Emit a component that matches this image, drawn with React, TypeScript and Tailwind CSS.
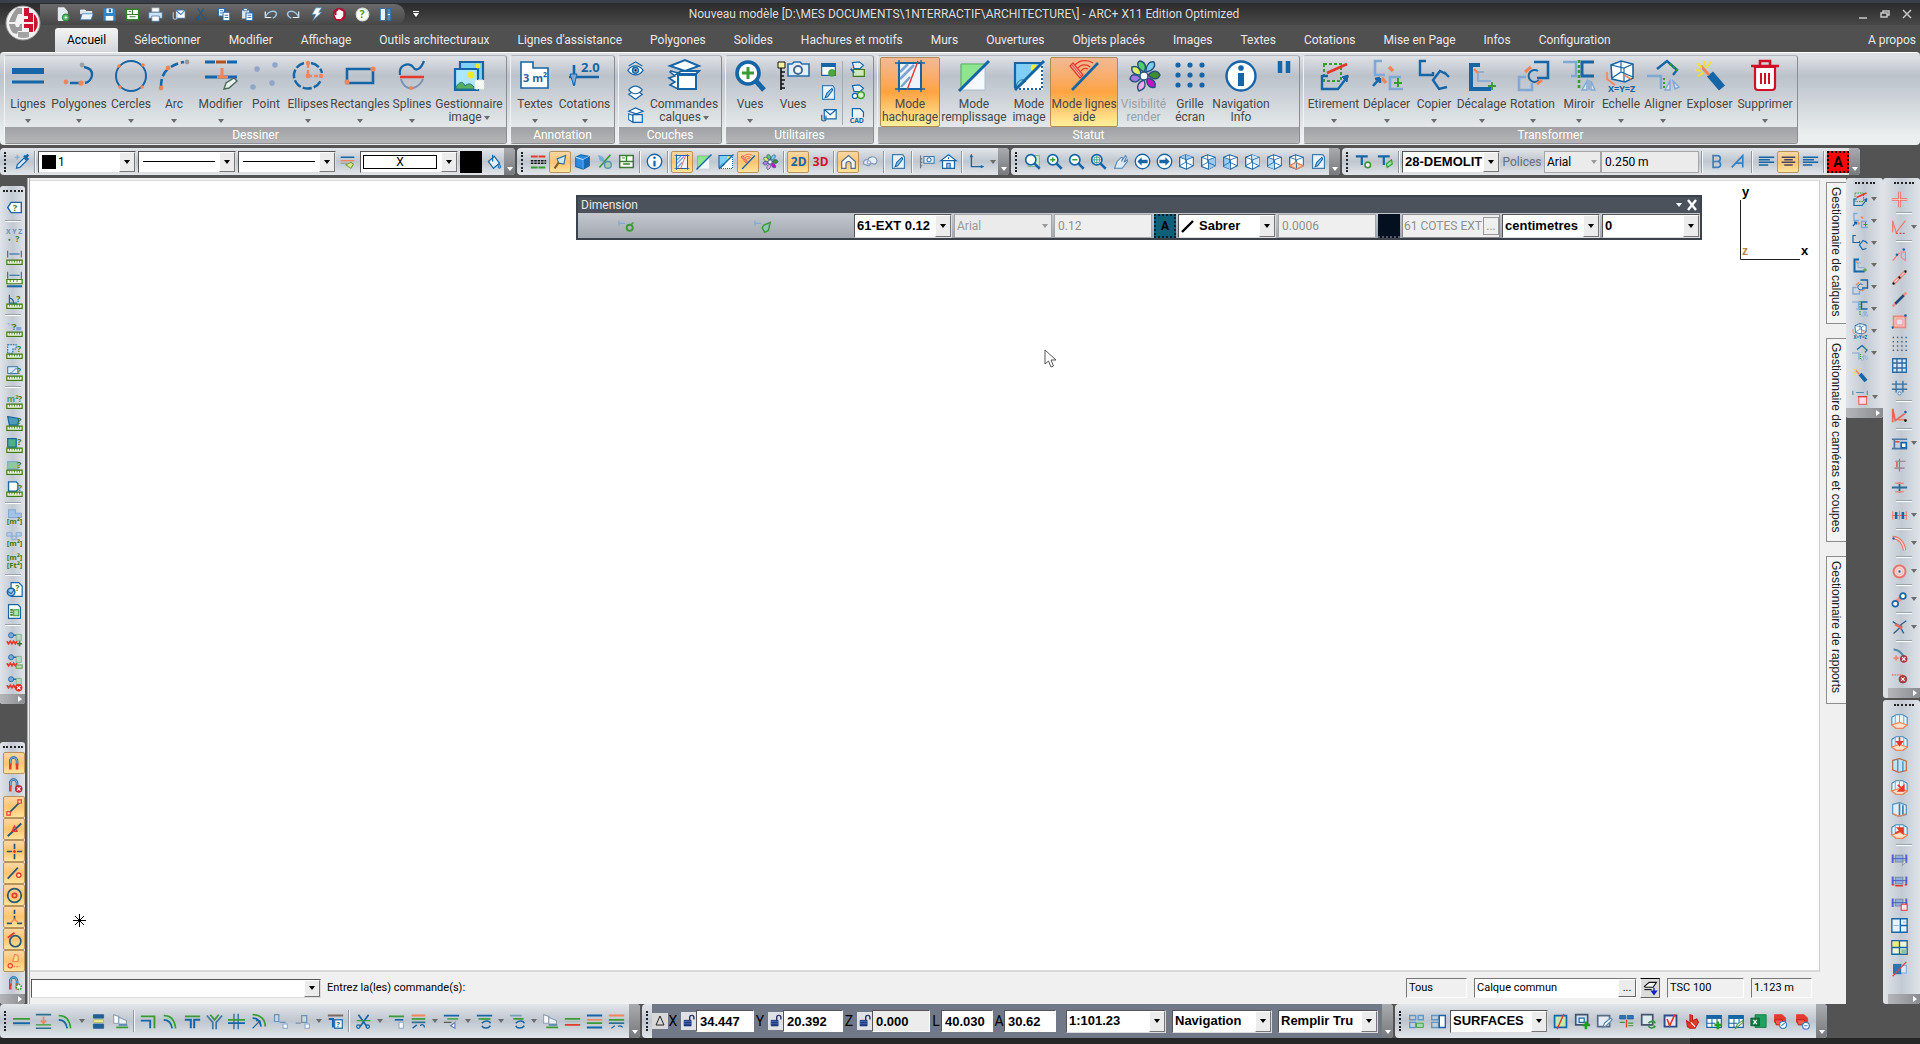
import React from 'react';

type TextShape = { t: string; x: number; y: number; s: number; f: string };
// [path, stroke, fill, stroke width, dash]
type Shape = [string, string, string?, number?, string?] | TextShape;

const B = '#1565a7';
const L = '#7fa8d4';
const R = '#e5392d';
const O = '#f0855a';
const G = '#3a9b35';
const D = '#3d7a12';
const P = '#a9c8ea';
const W = '#ffffff';
const K = '#111111';
const N = 'none';

const dot = (x: number, y: number, r: number) =>
  `M${x - r} ${y}a${r} ${r} 0 1 0 ${2 * r} 0a${r} ${r} 0 1 0 ${-2 * r} 0`;

const ruler: Shape[] = [
  ['M1 13h18v5H1z', D, '#f4fbe9', 1.4],
  ['M4 13v3M7 13v3M10 13v3M13 13v3M16 13v3', D, N, 1],
];
const ask = (x: number, y: number, s = 11): Shape => ({ t: '?', x, y, s, f: D });

const box = (face: string, fill: string): Shape[] => [
  ['M2 5l7-3 9 3v10l-8 4-8-3z', B, W, 1.2],
  [face, N, fill],
  ['M2 5l8 3 8-3M10 8v11M2 5v11M9 2v9M2 15l7-4 9 4', B, N, 1],
];
const room = (extra: Shape[]): Shape[] => [
  ['M1 5l5-3h8l5 3v9l-5 4H6l-5-4z', '#3f86b8', '#e8f6fd', 1.2],
  ['M10 2v9M5 3v9M15 3v9', L, N, 1.2],
  ['M1 14l9-3 9 3-5 4H6z', O, '#fde3c8', 1.4],
  ...extra,
];
const magnet: Shape[] = [
  ['M5 12V7a4 4 0 0 1 8 0v5', B, N, 3],
  ['M5 12V7a4 4 0 0 1 8 0v5', P, N, 1],
  ['M5 10v7M13 10v7', R, N, 3],
];
const lens: Shape[] = [
  [dot(8, 8, 6), B, W, 2],
  ['M12.5 12.5l6 6', B, N, 3],
];
const server: Shape[] = [
  [dot(6, 5, 3), B, L, 1],
  ['M9 5h5', B, N, 1.5],
  ['M12 4h6v7h-6z', '#7fae8d', '#b9d8c0', 1],
  ['M1 12l2 3 2-3 2 3 2-3 2 3 2-3', R, N, 2],
];
const folder: Shape[] = [
  ['M3 2h9l4 4v5H3z', R, R, 1],
  ['M3 8h9l3 6H5z', '#b01818', '#f25a50', 1],
];
const dims: Shape[] = [
  ['M2 4v10M18 4v10', '#5a62d8', N, 2.4],
  ['M5 5h9v8H5z', '#7a8aa5', '#8fb0d8', 1.2],
  ['M1 9h18', '#4450c8', N, 1],
];

const big: Record<string, Shape[]> = {
  lignes: [['M0 11h32', B, N, 6], ['M0 22h32', B, N, 3]],
  polygones: [
    ['M21 7c12 2 9 14 1 16', B, N, 2.4],
    ['M7 23h10', B, N, 2.4],
    [dot(19, 5, 2.4), N, '#9aa0a8'], [dot(3, 22, 2.4), N, O], [dot(18, 23, 2.6), N, O],
  ],
  cercles: [[dot(16, 16, 15), B, N, 2], [dot(4, 6, 1.8), N, O], [dot(28, 5, 1.8), N, O], [dot(5, 27, 1.8), N, O], [dot(27, 27, 1.8), N, O]],
  arc: [
    ['M3 27c0-8 2-14 7-18', B, N, 2.6, '8 3'],
    ['M13 7c4-3 8-4 13-5', B, N, 2.6, '8 3'],
    [dot(3, 28, 2.4), N, O], [dot(10, 8, 2.4), N, O], [dot(29, 2, 2.4), N, '#9a9a9a'],
  ],
  modifier: [
    ['M0 2h10M22 2h10', B, N, 3], ['M11 2h10', '#b5501f', N, 3],
    ['M0 17h32', B, N, 3], ['M17 8v9M12 17h11', O, N, 3],
    ['M19 29l2-6 8-5 3 3-8 7z', '#4d6a60', '#e9f5ea', 1.4],
  ],
  point: [[dot(7, 9, 2.8), N, '#8fa6c8'], [dot(25, 5, 2.8), N, '#8fa6c8'], [dot(3, 27, 2.8), N, '#8fa6c8'], [dot(22, 23, 2.8), N, '#8fa6c8']],
  ellipses: [
    ['M12 3a14 13 0 1 0 17 17M19 3a14 13 0 0 1 11 10', B, N, 2.4, '9 2'],
    ['M16 4v12h14', O, N, 2.4, '4 2'], [dot(16, 3, 2.2), N, O], [dot(16, 16, 2.4), N, O], [dot(29, 16, 2.2), N, O],
  ],
  rectangles: [['M3 9h26v14H3z', B, N, 2.6], [dot(29, 9, 2.6), N, O], [dot(3, 22, 2.6), N, O]],
  splines: [
    ['M4 15C2 4 14 2 17 7s8 2 11-6', B, N, 2.2],
    ['M4 17h24', R, N, 2.6], ['M5 19c2 8 8 10 12 9s8-4 10-9', '#7c93b3', N, 2], [dot(15, 28, 2), N, O],
  ],
  gestionnaire: [
    ['M7 2h23v19H7z', B, '#7fd3fb', 2.2], ['M2 9h23v21H2z', B, '#aee6fb', 2.2],
    [dot(18, 15, 3.4), N, '#f3ea25'], [dot(25, 6, 2.4), N, '#f3ea25'],
    ['M3 27c4-6 7-6 9-1 3-3 6-3 9 1v2H3z', '#1d7b91', '#58b05c', 1],
    ['M22 20h9v9h-9z', '#dfe7e0', '#f5fbf0', 1, '2 1'],
  ],
  textes: [['M2 2h12v6h15v20H2z', B, W, 1.6], { t: '3 m²', x: 4, y: 22, s: 11, f: '#28649c' }],
  cotations: [
    ['M5 5v20M0 17h30', B, N, 2.6], ['M1 14l4 12 3-12z', B, L, 1],
    { t: '2.0', x: 12, y: 12, s: 13, f: B },
  ],
  commandes: [
    ['M2 6l15-6 14 6-14 5z', B, W, 2], ['M3 11l7 2v16l-8-4 5-3-6-4 6-2-5-4z', B, W, 1.6],
    ['M9 14l4-3h18l-3 3z', B, W, 2], ['M10 15h18v14H10z', B, W, 2],
  ],
  vues: [[dot(14, 13, 11), B, W, 3.6], ['M14 7v12M8 13h12', G, N, 3], ['M22 21l8 9', B, N, 5]],
  vues2: [
    ['M4 8v22M4 12h4M4 16h3M4 20h4M4 24h3M4 28h4', K, N, 1.6], ['M1 2h7v6H1z', K, '#f6f3a0', 1],
    ['M11 4h4l2-2h6l2 2h7v12H11z', '#2a6da8', '#e2effa', 1.6], [dot(21, 10, 4), '#4a6a90', '#f5fafc', 2],
  ],
  hachurage: [
    ['M5 3h22v26H5z', B, '#eef3fa', 2], ['M6 12l8-8M6 19L20 5M7 27l9-10', '#7fa3cf', N, 2.6],
    ['M1 3h30M1 29h30M5 0v32M27 0v32', B, N, 1.4], ['M24 1L13 30', R, N, 1.4],
  ],
  remplissage: [
    ['M3 4h24v26H3z', '#a8bccf', '#f7fafd', 1], ['M3 4h23L3 29z', N, '#8fe58f'], ['M3 4h24M3 4v26', '#5ab85a', N, 1.2],
    ['M31 1L1 31', B, N, 3],
  ],
  image: [
    ['M2 3h28v27H2z', N, W], ['M2 3h28L2 30z', N, '#7fd0f7'], [dot(21, 8, 3.4), N, '#f4ec37'],
    ['M3 26c3-7 6-7 10-5L6 27z', B, '#8fe0d8', 1], ['M29 6v23H4', B, N, 2, '2 2'], ['M2 28V3h26', B, N, 2.2],
    ['M31 1L2 30', B, N, 3],
  ],
  lignesaide: [
    ['M2 6l10 12 3-3L5 3z', R, '#f6b0a0', 1.2], ['M4 5l10 12', R, N, 1],
    ['M7 5c5-6 14-5 18-2M10 8c3-4 9-4 12-1M13 11c2-3 5-3 7-2', R, N, 1.2],
    ['M30 3L4 30', B, N, 2.6],
  ],
  visibilite: [
    ['M16 12C8 8 9 2 12 1c5 1 7 5 4 11z', '#28527e', '#4fd070', 1.4],
    ['M18 12c0-8 4-11 8-10 2 4-1 9-8 10z', '#28527e', '#7ccdf0', 1.4],
    ['M20 15c6-6 10-4 12 0-2 5-7 5-12 0z', '#28527e', '#3f8f2f', 1.4],
    ['M19 18c8 1 9 6 8 9-5 2-9-2-8-9z', '#28527e', '#c216c9', 1.4],
    ['M16 20c3 7-1 10-5 11-3-4-1-9 5-11z', '#28527e', '#f7a6e6', 1.4],
    ['M13 18c-5 6-9 4-11 1 1-5 6-6 11-1z', '#28527e', '#a878e0', 1.4],
    ['M13 15C5 15 3 11 4 7c5-2 9 2 9 8z', '#28527e', '#dff25a', 1.4],
    [dot(16, 16, 4), '#28527e', W, 1.4],
  ],
  grille: [4, 16, 28].flatMap((x) => [5, 15, 25].map((y): Shape => [dot(x, y, 2.6), N, B])),
  navigation: [[dot(16, 16, 14.5), B, W, 2.4], [dot(16, 8, 2.8), N, B], ['M16 13v13', B, N, 6]],
  pause: [['M12 2v12M20 2v12', B, N, 4.5]],
  etirement: [
    ['M6 4h17v17H6z', G, N, 2, '3 2'], ['M4 15v14h16l10-13M10 16H4', B, N, 2.4], ['M24 17l6-2-1 7z', B, B, 1],
    ['M9 13L29 4', R, N, 3],
  ],
  deplacer: [
    ['M11 1H4v14h10', L, N, 2.6], ['M2 26l7-8M9 18l-5 1M9 18v5', B, N, 2.6], ['M30 17H19v12h13', L, N, 2.6],
    ['M27 18v9M23 23h8', G, N, 2], ['M18 7l4 4M11 18l4 5', O, N, 3.4],
  ],
  copier: [['M8 1H2v14h13v-3', B, N, 2.4], ['M28 14l-6-3-7 9 6 9 8-2M26 12l5 5', B, N, 2.4]],
  decalage: [['M14 5H5v24h20', B, N, 4], ['M18 12h-6v9h13', L, N, 1.6], ['M8 9l4 4', O, N, 2.4], ['M22 26h8M26 22v8', G, N, 1.8]],
  rotation: [
    ['M17 2h14v16H20', B, N, 2.6], ['M9 17H2v13h13v-7', L, N, 2.6], ['M21 11a6 6 0 1 0 1 9', B, N, 2], ['M8 12l6-5M20 24l5-4', O, N, 3],
  ],
  miroir: [
    ['M31 2H19v14h12', B, N, 3], ['M0 2h13v14H8', L, N, 2.4], ['M16 0v30', G, N, 2.6, '3 2'],
    ['M26 20v10M24 21l-5 9h5zM28 21l4 9h-4z', L, '#d7e5f4', 1.4],
  ],
  echelle: [
    ['M6 5l10-4 12 3v14l-8 4-13-3z', B, W, 1.6], ['M6 5l13 3 9-4M19 8v14M16 1v11M7 18l9-6 12 5', B, N, 1.2],
    ['M2 12v7l8 6M19 15l7 4', O, N, 1.6], { t: 'X=Y=Z', x: 3, y: 32, s: 9, f: B },
  ],
  aligner: [
    ['M10 9l10-8 10 9-4 5', B, N, 2.4], ['M23 4l8 7', G, N, 2.6, '2 2'], ['M0 16h14v13', L, N, 2.4], ['M17 18v12', G, N, 2, '2 2'],
    ['M23 21l-5 9h5zM26 21l6 6-4 2z', L, '#d7e5f4', 1.4],
  ],
  exploser: [['M16 14l12 14', B, N, 8], ['M7 6l8 9', O, N, 3], ['M10 1l2 7M3 3l5 5M1 10l7 1M4 16l5-3M14 6l3-4', '#f1e12a', N, 1.8]],
  supprimer: [
    ['M6 7h20v20q0 3-3 3H9q-3 0-3-3z', '#cf1126', W, 2.2], ['M2 6h28M11 5V1h10v4', '#cf1126', N, 2.6],
    ['M12 13v11M16 13v11M20 13v11', '#cf1126', N, 2],
  ],
};

const small: Record<string, Shape[]> = {
  // quick access bar
  new: [['M3 1h8l4 5v12H3z', W, '#dfeaf2', 1], [dot(13, 14, 4.5), '#2f8a45', '#5cba6c', 1.4], [dot(13, 14, 1.4), N, W]],
  open: [['M2 4h6l2 2h7v3H2z', W, '#d6e4ee', 1], ['M2 17l2-8h15l-3 8z', '#3a7ab3', '#eaf3fa', 1]],
  save: [['M2 2h14l2 2v14H2z', '#2a78b6', '#2f86c8', 1], ['M6 2h8v6H6zM5 12h10v6H5z', N, W], ['M9 3h3v4H9z', N, B]],
  plan: [['M2 3h16v14H2z', '#3a7d35', W, 1.8], ['M2 10h16M10 3v7M6 13h8', '#3a7d35', N, 1.6], ['M5 6h3', '#3a7d35', N, 1.2]],
  print: [['M5 1h10v6H5z', '#7a8c9c', W, 1], ['M1 7h18v8H1z', '#3a6fa0', '#cfe4f6', 1], ['M5 12h10v7H5z', '#3a6fa0', W, 1]],
  mail: [['M6 4h13v11H6z', '#3372a8', W, 1.4], ['M6 4l7 6 6-6', '#3372a8', N, 1.4], ['M3 7v8a3 3 0 0 0 5 0V8', '#9fc0de', N, 1.6]],
  cut: [['M5 2l8 12M13 2L5 14', '#25567d', N, 1.6], [dot(4, 16, 2), '#25567d', N, 1.4], [dot(14, 16, 2), '#25567d', N, 1.4]],
  copy: [['M2 2h8v10H2z', '#2d6da6', W, 1.4], ['M8 7h9v11H8z', '#2d6da6', W, 1.4], ['M4 5h4M4 8h3M10 11h5M10 14h5', '#2d6da6', N, 1.2]],
  paste: [['M2 4h11v12H2z', '#2d6da6', '#dbe9f5', 1.6], ['M5 2h5v3H5z', '#2d6da6', W, 1], ['M8 8h9v10H8z', '#2d6da6', W, 1.4], ['M10 11h5M10 14h5', '#2d6da6', N, 1.2]],
  undo: [['M3 6v8h8', W, N, 1.4], ['M3 14c4-10 14-10 15-5 0 3-3 5-5 6', '#9cc8ec', N, 1.8]],
  redo: [['M17 6v8H9', W, N, 1.4], ['M17 14C13 4 3 4 2 9c0 3 3 5 5 6', '#9cc8ec', N, 1.8]],
  bolt: [['M9 1h8l-4 6h4L5 18l4-8H4z', '#3f86bd', W, 1]],
  stop: [[dot(10, 10, 9), N, '#b01030'], ['M6 16l-3-6 3 1V6l2-1 1-2 2 1 2 1 2 1v6l-3 4z', N, W]],
  help: [[dot(10, 10, 8.5), '#cfe0d0', W, 1.4], { t: '?', x: 6, y: 15, s: 14, f: '#4a9a25' }],
  door: [['M3 2h7v16H3z', '#2a6aa5', '#eaf2fa', 1.2], ['M12 2h5v16h-5z', '#2a6aa5', '#4a8bc4', 1.2], ['M13 10h3', W, N, 1.4]],
  // properties bar
  dropper: [['M4 18l1-4 8-8 3 3-8 8z', B, '#dcecf8', 1.4], ['M13 3l5 5M15 5l3-3', B, N, 3], ['M5 2v6M2 5h6', L, N, 1.4]],
  brushlines: [['M2 5h16', B, N, 2], ['M2 9h16', O, N, 1.6], ['M8 14l6 4 3-5-3-2z', '#7a9a40', '#dbe88a', 1.2], ['M2 12h8', '#888', N, 1]],
  paint: [['M4 10l7-6 6 8-7 6z', B, '#dff0fa', 1.4], ['M9 2v8', B, N, 1.4], ['M17 13c2 3 2 5 0 5s-2-2 0-5z', B, L, 1]],
  linetypes: [['M1 4h18', R, N, 2.4, '8 1'], ['M1 9h18M1 12h18', K, N, 1.8, '3 1'], ['M1 17h18', G, N, 2.4, '8 1']],
  trowel: [['M16 3l-2 10-6-1-2-5z', '#3a7290', '#cfe9ef', 1.4], ['M8 11l-5 7', '#7a5a30', N, 2.4]],
  cube: [['M2 5l6-3 10 2v11l-7 4-9-3z', B, '#2c8be0', 1.2], ['M2 5l9 3 7-4M11 8v11', '#bfe0fa', N, 1.2], ['M11 8l7-4v11l-7 4z', N, '#1668b5']],
  percent: [['M3 3l5 2 2 5-5-1z', L, '#6fb0de', 1], ['M17 2L4 17', G, N, 2], [dot(14, 14, 4), '#5a90b8', '#a8d0a8', 1.6]],
  info: [[dot(10, 10, 8.5), B, W, 1.6], [dot(10, 5.5, 1.5), N, B], ['M10 9v7', B, N, 2.6]],
  d2: [{ t: '2D', x: 1, y: 15, s: 14, f: '#1464b0' }],
  d3: [{ t: '3D', x: 1, y: 15, s: 14, f: '#d80f22' }],
  house: [['M2 10l8-7 8 7v8h-5v-5a3 3 0 0 0-6 0v5H2z', '#4f6f96', '#f4f8fb', 1.4]],
  clouds: [['M2 13c-1-4 2-6 5-5 1-4 8-5 10-1 2 4-1 6-3 6l-3-1-3 3z', '#7d97b5', '#e6eef6', 1.4], [dot(8, 11, 2), '#7d97b5', W, 1.2]],
  sheet: [['M3 2h12l2 3v13H3z', '#3f7cab', '#eaf5fb', 1.4], ['M6 16l2-5 6-6 1 2-6 8z', B, '#8fc1e2', 1.2]],
  camruler: [['M3 3v15M3 7h2M3 11h2M3 15h2', '#777', N, 1.4], ['M7 4h12v8H7z', '#3f78a8', '#dfedf8', 1.2], [dot(13, 8, 2.4), '#3f78a8', W, 1.2]],
  villa: [['M1 9l9-7 9 7zM3 9h14v9H3z', B, W, 1.4], ['M8 12h4v6H8zM10 5v2', B, '#9cc4e8', 1.2]],
  axes: [['M4 2v14h14', B, N, 1.6], ['M2 5l2-4 2 4zM15 14l4 2-4 2z', N, B]],
  // zoom bar
  zoomwin: [['M5 3h13v13H5z', '#7ba87b', '#d3ecc9', 1], ...lens],
  zoomin: [...lens, ['M8 5v6M5 8h6', G, N, 1.6]],
  zoomout: [...lens, ['M5 8h6', G, N, 1.6]],
  zoomall: [...lens, ['M8 3v10M3 8h10M5 5h6v6H5z', '#3a9b80', N, 1]],
  pan: [['M3 18l3-8 5-5 2 1-2 4 5-7 1 2-3 6 4-3v2l-6 8z', '#4f83b2', '#dfeaf4', 1.2]],
  prev: [[dot(10, 10, 8.5), B, W, 1.6], ['M9 5l-5 5 5 5v-3h7V8H9z', N, B]],
  next: [[dot(10, 10, 8.5), B, W, 1.6], ['M11 5l5 5-5 5v-3H4V8h7z', N, B]],
  boxtop: box('M2 5l7-3 9 3-8 3z', '#9cc9f0'),
  boxright: box('M10 8l8-3v10l-8 4z', '#9cc9f0'),
  boxleft: box('M2 5l8 3v11l-8-3z', '#9cc9f0'),
  boxback: box('M9 2l9 3v10l-9-4z', '#d2e8fa'),
  boxfront: box('M2 5l8 3v11l-8-3z', '#bcdcf5'),
  boxfloor: [...box('M2 15l7-4 9 4-8 4z', '#fbd0b0'), ['M2 15l7-4 9 4-8 4z', O, N, 1.4]],
  // text bar
  textgear: [['M1 4h14M8 4v10', B, N, 2.6], [dot(15, 14, 3.2), G, W, 2]],
  textbrush: [['M1 4h14M8 4v10', B, N, 2.6], ['M12 17l-1-4 6-5 1 5z', G, '#9fe0a8', 1.4]],
  bold: [['M6 3h5a3.5 3.5 0 0 1 0 7H6zM6 10h6a3.6 3.6 0 0 1 0 7H6z', '#3a80c0', N, 2]],
  italic: [['M2 17L15 3v14M7 12h8', '#3a80c0', N, 2]],
  alignleft: [['M1 5h18M1 8h13M1 11h18M1 14h11', B, N, 1.8]],
  aligncenter: [['M2 5h16M5 8h10M2 11h16M5 14h10', '#446', N, 1.8]],
  // small ribbon commands
  eye: [['M2 6l8-5 8 5', B, N, 1.4], ['M1 11c5-7 13-7 18 0-5 7-13 7-18 0z', B, W, 1.4], [dot(10, 11, 3.6), B, '#7fa8c8', 1.6], [dot(10, 11, 1.2), N, K]],
  layers: [['M2 12l8-5 8 5-8 6z', B, W, 1.4], ['M2 7c5-6 11-6 16 0-5 6-11 6-16 0z', B, W, 1.4]],
  layers2: [['M2 5l8-4 9 4-8 3z', B, W, 1.4], ['M2 8l5 2v8l-5-3z', B, W, 1.2], ['M7 9h11v9H7z', B, '#e5f1fb', 1.4]],
  window: [['M2 3h16v14H2z', B, W, 1.4], ['M2 3h16v4H2z', N, B], [dot(14, 14, 4), G, '#4aa843', 1]],
  envelope: [['M5 3h14v11H5z', B, W, 1.4], ['M5 3l7 6 7-6', B, N, 1.4], ['M2 9v6a3 3 0 0 0 5 0v-5', '#3f6f98', N, 1.6]],
  export1: [['M4 2l8-1 5 4-4 4H6z', B, '#e3effa', 1.4], ['M5 10h13v8H5z', D, '#cfe8bf', 1.4], ['M2 9l4 5', B, N, 2]],
  export2: [['M4 2l8-1 5 4-4 4H6z', B, '#e3effa', 1.4], [dot(14, 13, 4), G, '#d8efd0', 1.8], [dot(7, 14, 3), B, W, 1.4]],
  cad: [['M4 12V2h9l4 4v6', B, '#e9f4fb', 1.4], { t: 'CAD', x: 1, y: 19, s: 8, f: B }],
  // measuring bar
  tag: [['M6 4h12v12H6l-4-6z', B, W, 1.6], ask(8, 14, 11)],
  xyz: [{ t: 'X Y Z', x: 0, y: 8, s: 8, f: '#6b8fb8' }, [dot(4, 15, 1.2), N, D], ask(11, 18, 10)],
  dist: [['M2 2v8M18 2v8M4 6h12', B, N, 1.2], ...ruler],
  dist2: [['M2 1v8M18 1v8M4 5h12', B, N, 1.2], ['M1 10h18v5H1z', D, '#f4fbe9', 1.4], ['M5 10v3M9 10v3M13 10v3', D, N, 1], ['M1 18h18', B, N, 2.4]],
  angle: [['M4 2v10h9M4 6c3 0 5 3 5 6', B, N, 1.4], ask(12, 10, 10), ...ruler],
  seg: [['M2 3l6 2 4 4', L, N, 1.4, '2 2'], ['M12 7h6v4h-6z', N, L], ask(7, 10, 11), ...ruler],
  perim: [['M2 2h10v5H8v5H2z', B, '#c9dff3', 1.2, '2 1'], ask(13, 10, 10), ...ruler],
  curve: [['M2 2h12v8H2z', B, '#dbe9f6', 1], ['M5 9c4 0 4-5 8-5', L, N, 1.4], ask(13, 10, 10), ...ruler],
  area: [{ t: 'm²', x: 1, y: 10, s: 10, f: '#4f9a5a' }, ask(14, 11, 10), ...ruler],
  areapoly: [['M2 2l13 2-1 8H4z', B, '#4d9bb8', 1.4], ask(13, 10, 11), ...ruler],
  areasquare: [['M2 2h10v10H2z', B, '#4fb088', 1.4], ask(13, 9, 11), ...ruler],
  areablue: [['M2 3h12v9H2z', L, '#8fc8a0', 1.4], ask(13, 10, 11), ...ruler],
  outline: [['M3 1h9l2 2v7l-2 2H3z', B, W, 1.6], ask(14, 12, 10), ...ruler],
  m2fill: [['M3 1h8v4h7v5H3z', L, '#a3c3e6', 1.2], { t: '[m²]', x: 1, y: 18, s: 9, f: D }],
  m2split: [['M1 2h6v4H1zM12 2h6v4h-6zM7 6h5v4H7z', L, '#b7cfe9', 1], { t: '[m²]', x: 1, y: 18, s: 9, f: D }],
  m2ft: [{ t: '[m²]', x: 1, y: 8, s: 9, f: D }, { t: '[Ft²]', x: 1, y: 18, s: 9, f: D }],
  reportask: [['M6 2h9l4 4v12H6z', B, W, 1.4], [dot(6, 13, 4.5), B, '#a8cbea', 1.6], ['M2 12l4 3 4-5', B, N, 1.4], ask(11, 12, 10)],
  report: [['M3 2h11l3 3v13H3z', B, W, 1.4], ['M5 8h3M5 11h3M5 14h3', D, N, 2], ['M9 8h6v7H9z', G, '#b0dfb0', 1.2]],
  srvadd: [...server, ['M16 12v6M13 15h6', D, N, 2]],
  srvlink: [...server, ['M12 14h7v4h-7z', '#6a9a50', '#c1dfb0', 1.2]],
  srvdel: [...server, [dot(15, 15, 4), R, '#e02020', 1], ['M13 13l4 4M17 13l-4 4', W, N, 1.4]],
  // snap bar
  magnet: magnet,
  magnetoff: [...magnet, [dot(15, 14, 4), '#b02030', '#c82838', 1], ['M13 12l4 4M17 12l-4 4', W, N, 1.4]],
  magnetgear: [...magnet, [dot(15, 14, 3), G, W, 2, '2 1']],
  snapend: [['M4 16L16 4', '#285878', N, 2], ['M1 15h4v4H1zM14 1h4v4h-4z', R, '#ffe3b0', 1.4]],
  snapmid: [['M2 18L18 3', '#285878', N, 2.2], ['M10 6l3 6H7z', R, N, 1.6]],
  snapcross: [['M10 1v6M10 13v6M1 10h6M13 10h6', '#285878', N, 2], ['M10 8v4M8 10h4', R, N, 1.6]],
  snapnear: [['M2 16L14 3', '#285878', N, 2], [dot(15, 12, 2.6), R, '#ffe3b0', 1.6]],
  snapcenter: [[dot(10, 10, 8), '#285878', N, 2], [dot(10, 10, 2.6), R, N, 2]],
  snapperp: [['M10 1v12', '#285878', N, 2, '5 2'], ['M1 17h6M13 17h6', '#285878', N, 2], ['M6 16l4-4 4 4', O, N, 1.6]],
  snaptan: [[dot(11, 12, 6.5), '#285878', N, 2], ['M2 8l8-6', R, N, 2]],
  snaplast: [['M10 2c5-1 5 4 4 8H8z', O, '#f9e28a', 1.4], [dot(5, 15, 2.6), R, N, 1.4], ['M9 16h7', O, N, 1.4, '2 1']],
  // drafting bars on the right
  crossred: [['M10 1v18M1 10h18', '#f0685e', N, 3], ['M10 1v18M1 10h18', '#fbd4cf', N, 1]],
  anglered: [['M2 2l4 14L17 2M2 2v14', '#ef7a70', N, 1.4], ['M6 17h12', R, N, 1.4, '2 2']],
  nodes: [['M2 16l5-6M7 10l3-3', '#ef7a70', N, 1.4], ['M12 6h5v10l-5-4z', '#e88', N, 1.4], [dot(7, 9, 1.5), N, B], [dot(15, 3, 1.5), N, B]],
  segred: [['M3 17L17 3', '#ef8078', N, 4], ['M3 17L17 3', '#fad5d0', N, 1.4], [dot(3, 17, 1.4), N, K], [dot(10, 10, 1.4), N, K], [dot(17, 3, 1.4), N, K]],
  segblue: [['M2 18l4-4M14 6l4-4', '#f0908a', N, 3], ['M5 15L15 5', '#1f4a78', N, 3]],
  rectred: [['M3 4h14v13H3z', '#f0857c', '#f5c9c6', 2], ['M6 7h8v7H6z', '#e88', '#dfe4ea', 1], [dot(17, 3, 1.6), N, B], [dot(2, 17, 1.4), N, B]],
  dotgrid: [['M2 3h18M2 8h18M2 13h18M2 18h18', B, N, 1.6, '1.6 3.4']],
  grid: [['M2 2h16v16H2zM7 2v16M13 2v16M2 7h16M2 13h16', '#2c6aa0', '#d8e9f8', 1.6]],
  lanes: [['M1 6h18M1 12h18M6 2v14M14 2v14', '#3a70a0', N, 1.6], [dot(10, 17, 1.8), '#3a70a0', W, 1]],
  vred: [['M2 2l3 14L16 8M2 2v16', '#e6655c', N, 2], ['M8 15h10', O, N, 2], [dot(17, 6, 1.6), N, B], [dot(17, 16, 1.6), N, K]],
  bracket: [['M1 5h18M1 16h18M4 5v11', '#4a78a8', N, 2], ['M5 8h5', R, N, 1.6], ['M12 9h6v6h-6z', B, W, 2]],
  caliper: [['M5 5h12M4 13h12M10 2v15', '#9a7a80', N, 1.4], ['M7 6v6', R, N, 1.4]],
  caliper2: [['M1 10h18M10 4v12', '#2f6f9a', N, 2.2], ['M5 5h10M5 15h10', '#f0857a', N, 1.6]],
  bars: [['M1 10h18', '#e8685e', N, 1.2], ['M6 6v8M14 6v8', B, N, 3], ['M2 5v10M10 5v10M18 5v10', '#f0857a', N, 1.4]],
  arcred: [['M2 3c7 0 13 6 14 15', '#ea7268', N, 4], ['M2 3c7 0 13 6 14 15', '#f8d8d0', N, 1.4], [dot(3, 4, 1.4), N, B]],
  ringred: [[dot(10, 10, 7), '#e8756c', '#f9dcd8', 2.4], [dot(10, 10, 4), '#f8b0a8', N, 1], [dot(10, 10, 1.4), N, B]],
  chain: [['M6 13l8-7', '#f0908a', N, 5], [dot(5, 15, 3.4), B, W, 2], [dot(14, 6, 3.4), B, W, 2]],
  starred: [['M2 3l8 5 8-6M10 8l5 9M3 17l10-9', '#2f6090', N, 1.6], ['M5 6l8 5', '#e8685e', N, 3]],
  arcdel: [['M3 3c7 0 10 5 12 8', '#4f87a8', N, 2.4], ['M3 13h6M6 10v6', '#f0857a', N, 2], [dot(15, 14, 4), '#9c3038', '#b04048', 1], ['M13 12l4 4M17 12l-4 4', W, N, 1.2]],
  listdel: [['M1 7h13', '#e88a80', N, 2, '2 1'], [dot(14, 12, 4.5), '#9c3038', '#b04048', 1], ['M12 10l4 4M16 10l-4 4', W, N, 1.2]],
  room: room([]),
  roomdown: room([['M10 3v7M7 8l3 4 3-4z', R, R, 2]]),
  roomblue: [['M2 4l8-2 8 3v11l-9 2-7-3z', '#b86a48', '#bfe3f7', 1.4], ['M8 3v14M14 5v12', '#3f7fae', N, 1.4]],
  roomse: room([['M8 7l7 6M15 8v6H9z', R, R, 2]]),
  roomside: [['M2 4l8-2 8 3v11l-9 2-7-3z', '#5a8fb8', '#dff0fa', 1.4], ['M10 3v14M14 5v12', '#3f7fae', N, 2], ['M2 15l8 3 8-3', O, N, 1.6]],
  roomright: room([['M5 12l8-4M8 6h6v6z', R, R, 2]]),
  dimbrush: [...dims, ['M13 17l2-6 3 2z', '#7a9a8a', '#dff0e0', 1]],
  dimred: [...dims, ['M1 14h3M16 14h3M5 15h9', R, N, 1.6]],
  dimbox: [...dims, ['M12 11h7v7h-7z', R, '#fbe6e6', 1.2]],
  viewports: [['M1 2h18v16H1z', B, '#e5f4fd', 1.6], ['M11 2v16M11 10h8', B, N, 1.6], ['M3 10h6M14 6h3', L, N, 1]],
  viewports2: [['M1 2h18v16H1z', B, '#eef7d2', 1.6], ['M2 3h8v7H2z', N, '#f0ee70'], ['M10 2v16M1 10h18', B, N, 1.6], ['M12 12h6v5h-6z', N, '#8fc0a0']],
  slash: [['M3 4h9v11H3z', B, '#2f74b0', 1], ['M12 5h6v9h-6', L, '#dbe9f5', 1.2], ['M2 18L18 1', '#d04a50', N, 1.6]],
  trash: [['M1 2v5M5 4h9M18 2v5', '#4f88b0', N, 1.2], ['M8 9h9v9H8z', '#e07070', '#f9e0e0', 1.4], ['M7 9h11', R, N, 1.4]],
  // walls bar
  wall: [['M0 7h20', G, N, 2], ['M0 12h20', B, N, 2], ['M0 14h20', '#7aa8a8', N, 1]],
  wallsplit: [['M1 2h18', '#2f7090', N, 2], ['M10 4v8M7 9l3 3 3-3', O, N, 2], ['M1 14h18', G, N, 1.6], ['M1 18h18', '#2f7090', N, 1.6]],
  wallarc: [['M2 3c8 0 13 5 14 15', G, N, 2], ['M2 8c6 0 9 4 10 10', B, N, 2], ['M2 5c8 0 10 4 12 13', '#a8d8b8', N, 1.6]],
  wallstack: [['M4 2h12v4H4zM4 13h12v5H4z', '#1f5f98', '#1f5f98', 1], ['M4 8h12v3H4z', '#a8b848', '#f3f0a8', 1]],
  wallslope: [['M2 2l6 2v8H2z', '#8a9ab0', W, 1.2], ['M8 5l9 4v4H8z', '#8a9ab0', '#eef2f6', 1.2], ['M5 17h14', G, N, 2], ['M8 14h10', B, N, 1.2]],
  wallL: [['M1 4h16v14', G, N, 2.2], ['M1 9h11v9', B, N, 2.2]],
  wallT: [['M1 4h18', G, N, 2.2], ['M1 8h7v10M19 8h-7v10', B, N, 2.4]],
  wallY: [['M1 3l7 8v8M19 3l-7 8v8', '#3f78a8', N, 2], ['M5 2l5 6 5-6', G, N, 2]],
  wallX: [['M7 1v18M12 1v18', '#3f78a8', N, 1.8], ['M0 8h20', G, N, 2], ['M0 12h20', B, N, 2]],
  wallarc2: [['M3 2c10 0 15 6 15 14', G, N, 2], ['M3 6c7 0 9 4 10 10', B, N, 2], ['M3 18l9-9M12 9H7M12 9v4', B, N, 1.4]],
  wallmove: [['M3 2h5v8H3zM9 11h7', '#6c90b0', '#c8d8e6', 1.4], ['M13 13h5v5h-5z', L, W, 1.2]],
  wallmove2: [['M2 12h6M9 3h6v8H9z', '#6c90b0', '#c8d8e6', 1.4], ['M13 13h5v5h-5z', L, W, 1.2]],
  walltrash: [['M1 3h18', '#7a6a60', N, 2.4], ['M2 7h5v10', B, N, 2.4], ['M9 8h9v10H9z', '#3a78b0', W, 1.6], { t: '?', x: 11, y: 17, s: 9, f: B }],
  cutwall: [['M4 2l10 14M16 2L6 16', B, N, 2], ['M2 9h16', G, N, 1.4], [dot(4, 16, 2), B, N, 1.4], [dot(15, 16, 2), B, N, 1.4]],
  wallprop: [['M1 4h18', G, N, 2], ['M8 8h10', B, N, 2], ['M13 11h5v7h-5z', '#8aa8c8', W, 1.2]],
  wallsync: [['M2 3h16', O, N, 2.4], ['M2 7h16', G, N, 2], ['M2 11h16', '#2f7090', N, 2], ['M3 18l5-4M12 15c3-3 5 0 5 2', B, N, 1.6]],
  wallbrush: [['M1 3h18', B, N, 2], ['M5 7h13', G, N, 1.6], ['M14 11l-5 4 5 3z', '#5f86b8', W, 1.4], ['M1 11h9', '#555', N, 1.4]],
  wallrot: [['M1 3h18', B, N, 2], ['M3 7h14', G, N, 2], ['M7 12c3-4 9-3 10 0M17 15c-3 4-9 3-10 0', B, N, 1.8]],
  wallrot2: [['M1 3h14', '#7aa0c0', N, 2], ['M5 7h12', G, N, 2], ['M8 12c3-4 9-3 10 0M18 15c-3 4-9 3-10 0', B, N, 1.8]],
  walldouble: [['M1 7h18', G, N, 2], ['M1 10h18', '#a9c0b8', N, 1.2], ['M1 14h18', R, N, 2]],
  walltriple: [['M1 3h18', B, N, 2.2], ['M1 8h18', O, N, 1.6], ['M1 12h18', G, N, 2], ['M1 17h18', B, N, 2.2]],
  wallwarm: [['M1 3h18', O, N, 2.4], ['M1 8h18', G, N, 2], ['M1 12h18', '#2f7090', N, 2], ['M4 18l4-3M12 16c2-2 5 0 5 1', B, N, 1.4]],
  // surfaces bar
  surfgrid: [['M2 3h7v5H2zM12 3h6v5h-6zM2 11h7v6H2z', '#5f98c8', N, 1.6], ['M10 12h8v5h-8z', G, '#9fdcae', 1]],
  surfpage: [['M2 3h8v5H2zM2 11h8v6H2z', '#5f98c8', N, 1.6], ['M11 3h7v14h-7z', B, W, 1.6]],
  surfslash: [['M3 3h14v14H3z', B, '#c5e8b0', 2], ['M14 1L6 19', R, N, 1.6]],
  surfadd: [['M2 2h14v12H2z', '#44546e', '#d8e4f0', 2], ['M6 6h6v5H6z', B, W, 1.4], ['M14 10v9M10 14h9', '#1fa01f', N, 3]],
  surfedit: [['M2 3h14v13H2z', '#5a6a84', '#e3ecf5', 2], ['M8 17l2-5 7-6 2 2-7 7z', '#5a8ab0', W, 1.4]],
  surftable: [['M2 3h7v4H2zM11 3h7v4h-7z', '#1f5f9f', '#2f75b5', 1], ['M10 8v9', R, N, 1.6], ['M2 11h6M12 12h6M12 15h6', G, N, 1.4]],
  surfsync: [['M2 2h13v12H2z', '#44546e', '#dfe9f2', 2], ['M10 12c2-3 7-3 8 0M18 15c-2 4-7 3-8 0', '#2f9a3a', N, 2]],
  surfcheck: [['M3 3h14v13H3z', '#304a86', '#e9eef6', 2.2], ['M6 7l3 8 6-13', R, N, 2]],
  surfhand: [['M4 16l-1-7 4 3V2l3 1v6l5-2 2 4-4 7H7z', '#b8201c', '#e5382c', 1.2], ['M8 11l5 5', W, N, 1.4]],
  tableadd: [['M1 3h17v14H1z', B, W, 1.4], ['M1 3h17v4H1z', N, B], ['M7 7v10M13 7v5M1 12h10', B, N, 1.2], ['M14 10v9M10 14h9', '#1fa01f', N, 3]],
  tableedit: [['M1 3h17v14H1z', B, W, 1.4], ['M1 3h17v4H1z', N, B], ['M7 7v10M13 7v5M1 12h10', B, N, 1.2], ['M9 18l2-5 6-4 1 2z', '#4f8f4f', '#e5f3df', 1.2]],
  excel: [['M6 2h13v15H6z', '#0f7a40', '#21a060', 1], ['M1 6h10v9H1z', '#0b5c30', '#107c41', 1], ['M4 8l4 5M8 8l-4 5', W, N, 1.4]],
  redgear: [...folder, [dot(13, 14, 4), '#3f80b8', W, 1.4], ['M11 15l4-3', '#3f80b8', N, 1.2]],
  redmail: [...folder, [dot(14, 15, 4), '#3f80b8', W, 1.4], ['M12 15h4', '#3f80b8', N, 1.2]],
  dimgear: [['M1 4v6M1 7h7', L, N, 1.4], [dot(13, 12, 3.4), G, N, 2], ['M15 8l2-2', G, N, 1.6]],
  dimpen: [['M1 4v6M1 7h7', L, N, 1.4], ['M9 12l2-3 7-3-2 9-4 2z', G, '#8fc8b0', 1.6]],
  layerdown: [['M3 8l6-5h9l-4 6H4z', K, '#f4f4f4', 1.4], ['M3 12h9', K, N, 1.4], ['M15 10v5M12 14l3 4 3-4z', '#1420c8', '#1420c8', 1.6]],
  unlock: [['M3 9h10v8H3z', '#12307a', '#12307a', 1], ['M3 11h10M3 14h10', '#6f8ad0', N, 1], ['M11 9V5a3 3 0 0 1 6 0v3', '#27306a', N, 2]],
};

function Icon({ name, size = 20 }: { name: string; size?: number }) {
  const isBig = name in big;
  const shapes = isBig ? big[name] : small[name] ?? [];
  const side = isBig ? 32 : 20;
  return (
    <svg
      width={size}
      height={size}
      viewBox={`0 0 ${side} ${side}`}
      className="shrink-0 overflow-visible font-['Open_Sans',sans-serif]"
      aria-hidden="true"
    >
      {shapes.map((s, i) =>
        Array.isArray(s) ? (
          <path key={i} d={s[0]} stroke={s[1]} fill={s[2] ?? 'none'} strokeWidth={s[3] ?? 1} strokeDasharray={s[4]} />
        ) : (
          <text key={i} x={s.x} y={s.y} fontSize={s.s} fill={s.f} fontWeight="bold">
            {s.t}
          </text>
        ),
      )}
    </svg>
  );
}

const Caret = ({ className = 'border-t-[#6b6b6b]' }: { className?: string }) => (
  <span className={`block h-0 w-0 border-x-[3px] border-t-[4px] border-x-transparent ${className}`} />
);

const HOT = 'border border-[#b9935a] bg-linear-to-b from-[#fbd7a3] via-[#fdc46f] to-[#fee39a]';

// Items: "name" plain, "name*" pressed, "name>" with a drop-down arrow, "|" separator
function Tools({ items, vertical = false, arrows = false }: { items: string; vertical?: boolean; arrows?: boolean }) {
  return (
    <>
      {items.split(' ').map((item, i) => {
        if (item === '|') {
          return vertical ? (
            <span key={i} className="my-[2px] h-[2px] w-4 self-center border-t border-b border-t-[#9aa1ab] border-b-white" />
          ) : (
            <span key={i} className="mx-[2px] h-[22px] w-[2px] border-r border-l border-l-[#8f97a2] border-r-[#f4f6f8]" />
          );
        }
        const name = item.replace(/[*>]/, '');
        const pressed = item.endsWith('*');
        const drop = item.endsWith('>');
        return (
          <React.Fragment key={i}>
            <button
              aria-label={name}
              className={`flex h-[22px] shrink-0 items-center justify-center rounded-xs ${arrows ? 'w-full gap-[3px]' : 'w-[22px]'} ${pressed ? HOT : ''}`}
            >
              <Icon name={name} size={name in big ? 16 : 17} />
              {arrows && (drop ? <Caret /> : <span className="w-[6px]" />)}
            </button>
            {drop && !arrows && (
              <button aria-label={`${name} options`} className="flex h-[22px] w-[11px] items-center justify-center">
                <Caret />
              </button>
            )}
          </React.Fragment>
        );
      })}
    </>
  );
}

const Grip = ({ vertical = false }: { vertical?: boolean }) =>
  vertical ? (
    <span className="my-1 h-0 w-5 shrink-0 self-center border-t-2 border-dotted border-[#222]" />
  ) : (
    <span className="mx-1 h-5 w-0 shrink-0 border-l-2 border-dotted border-[#222]" />
  );

function Bar({ children, tall = false, className = '' }: { children: React.ReactNode; tall?: boolean; className?: string }) {
  return (
    <div
      className={`flex shrink-0 items-center overflow-hidden rounded-[4px] bg-linear-to-b from-[#e3e6ea] via-[#bfc6cf] to-[#e2e6ea] ${tall ? 'h-[34px]' : 'h-[27px]'} ${className}`}
    >
      <Grip />
      {children}
      <span className="ml-auto flex h-full w-[11px] shrink-0 items-end justify-center bg-linear-to-b from-[#a9abae] to-[#77797c] pb-1">
        <Caret className="border-t-white" />
      </span>
    </div>
  );
}

function SideBar({ children, className = '' }: { children: React.ReactNode; className?: string }) {
  return (
    <div className={`flex shrink-0 flex-col overflow-hidden rounded-[3px] bg-linear-to-r from-[#e0e4e9] via-[#c3cad3] to-[#e0e4e9] ${className}`}>
      <Grip vertical />
      {children}
      <span className="mt-auto flex h-[10px] shrink-0 items-center justify-end self-stretch bg-linear-to-r from-[#b4b6b9] to-[#8a8c8f] pr-[3px]">
        <span className="h-0 w-0 border-y-[3px] border-l-[4px] border-y-transparent border-l-white" />
      </span>
    </div>
  );
}

type ComboProps = { label: string; value?: string; className?: string; lead?: React.ReactNode; off?: boolean; flat?: boolean; bold?: boolean };
function Combo({ label, value = '', className = '', lead, off, flat, bold }: ComboProps) {
  return (
    <div
      className={`relative flex shrink-0 items-center overflow-hidden border ${flat ? 'border-[#a5a5a5] bg-[#ebebeb]' : 'border-t-[#555] border-r-[#ddd] border-b-[#ddd] border-l-[#555] bg-white'} ${className}`}
    >
      {lead}
      <select
        aria-label={label}
        disabled={off}
        className={`h-full min-w-0 flex-1 appearance-none bg-transparent pl-[2px] whitespace-nowrap opacity-100 outline-none ${bold ? "font-['Liberation_Sans',sans-serif] text-[13px] font-bold" : 'text-xs'} ${off ? 'text-[#9a9a9a]' : 'text-black'}`}
      >
        <option>{value}</option>
      </select>
      <span
        className={`pointer-events-none absolute inset-y-0 right-0 flex items-center justify-center ${flat ? 'w-3' : 'w-4 border border-t-white border-r-[#777] border-b-[#777] border-l-white bg-[#ececec]'}`}
      >
        <Caret className={flat || off ? 'border-t-[#999]' : 'border-t-black'} />
      </span>
    </div>
  );
}

type Cmd = { icon: string; label: string; w: string; drop?: boolean; active?: boolean; dim?: boolean };
function RibbonButton({ icon, label, w, drop, active, dim }: Cmd) {
  const lines = label.split('\n');
  return (
    <button
      disabled={dim}
      className={`flex h-[70px] shrink-0 flex-col items-center rounded-xs border pt-[2px] text-xs leading-[13px] whitespace-nowrap ${w} ${
        active ? 'border-[#b08c58] bg-linear-to-b from-[#f1b993] via-[#fea341] to-[#fff19a]' : 'border-transparent'
      } ${dim ? 'text-[#9a9fa6]' : 'text-[#484848]'}`}
    >
      <Icon name={icon} size={32} />
      <span className="mt-[6px]">{lines[0]}</span>
      {lines[1] && (
        <span className="flex items-center gap-[2px]">
          {lines[1]}
          {drop && <Caret />}
        </span>
      )}
      {drop && !lines[1] && (
        <span className="mt-[8px]">
          <Caret />
        </span>
      )}
    </button>
  );
}

function Group({ title, children }: { title: string; children: React.ReactNode }) {
  return (
    <section className="flex h-[89px] flex-col overflow-hidden rounded-[3px] border border-t-[#b3b6bb] border-r-[#8b8d90] border-b-[#8b8d90] border-l-[#f2f2f2]">
      <div className="flex flex-1 items-start px-[2px] pt-px">{children}</div>
      <h2 className="h-4 bg-linear-to-b from-[#9fa1a4] to-[#b4b6b8] text-center text-xs leading-[16px] text-white">{title}</h2>
    </section>
  );
}

const TABS = [
  'Accueil', 'Sélectionner', 'Modifier', 'Affichage', 'Outils architecturaux', "Lignes d'assistance", 'Polygones', 'Solides',
  'Hachures et motifs', 'Murs', 'Ouvertures', 'Objets placés', 'Images', 'Textes', 'Cotations', 'Mise en Page', 'Infos', 'Configuration',
];

const DRAW: Cmd[] = [
  { icon: 'lignes', label: 'Lignes', w: 'w-[42px]', drop: true },
  { icon: 'polygones', label: 'Polygones', w: 'w-[60px]', drop: true },
  { icon: 'cercles', label: 'Cercles', w: 'w-[44px]', drop: true },
  { icon: 'arc', label: 'Arc', w: 'w-[42px]', drop: true },
  { icon: 'modifier', label: 'Modifier', w: 'w-[51px]', drop: true },
  { icon: 'point', label: 'Point', w: 'w-[40px]' },
  { icon: 'ellipses', label: 'Ellipses', w: 'w-[44px]', drop: true },
  { icon: 'rectangles', label: 'Rectangles', w: 'w-[60px]', drop: true },
  { icon: 'splines', label: 'Splines', w: 'w-[44px]', drop: true },
  { icon: 'gestionnaire', label: 'Gestionnaire\nimage', w: 'w-[70px]', drop: true },
];

const STATUS: Cmd[] = [
  { icon: 'hachurage', label: 'Mode\nhachurage', w: 'w-[60px]', active: true },
  { icon: 'remplissage', label: 'Mode\nremplissage', w: 'w-[68px]' },
  { icon: 'image', label: 'Mode\nimage', w: 'w-[42px]' },
  { icon: 'lignesaide', label: 'Mode lignes\naide', w: 'w-[68px]', active: true },
  { icon: 'visibilite', label: 'Visibilité\nrender', w: 'w-[51px]', dim: true },
  { icon: 'grille', label: 'Grille\nécran', w: 'w-[42px]' },
  { icon: 'navigation', label: 'Navigation\nInfo', w: 'w-[60px]' },
];

const TRANSFORM: Cmd[] = [
  { icon: 'etirement', label: 'Etirement', w: 'w-[55px]', drop: true },
  { icon: 'deplacer', label: 'Déplacer', w: 'w-[51px]', drop: true },
  { icon: 'copier', label: 'Copier', w: 'w-[44px]', drop: true },
  { icon: 'decalage', label: 'Décalage', w: 'w-[51px]', drop: true },
  { icon: 'rotation', label: 'Rotation', w: 'w-[51px]', drop: true },
  { icon: 'miroir', label: 'Miroir', w: 'w-[42px]', drop: true },
  { icon: 'echelle', label: 'Echelle', w: 'w-[42px]', drop: true },
  { icon: 'aligner', label: 'Aligner', w: 'w-[42px]', drop: true },
  { icon: 'exploser', label: 'Exploser', w: 'w-[51px]' },
  { icon: 'supprimer', label: 'Supprimer', w: 'w-[60px]', drop: true },
];

const QUICK = 'new open save plan print mail cut copy paste undo redo bolt stop help door'.split(' ');

function Header() {
  return (
    <header className="relative shrink-0 bg-[#505050] text-[#e8e8e8]">
      <div className="h-[3px] bg-[#3b3e4b]" />
      <div className="grid h-[22px] grid-cols-[1fr_auto_1fr] items-center bg-linear-to-b from-[#2b2b2b] to-[#484848]">
        <div className="flex items-center pl-10">
          <div className="flex h-[21px] items-center rounded-r-full bg-linear-to-b from-[#6a6a6a] to-[#474747] pr-2 pl-3">
            {QUICK.map((q) => (
              <button key={q} aria-label={q} className="flex w-[23px] justify-center">
                <Icon name={q} size={15} />
              </button>
            ))}
          </div>
          <button aria-label="Personnaliser" className="ml-2 flex flex-col items-center gap-px">
            <span className="h-px w-[6px] bg-white" />
            <Caret className="border-t-white" />
          </button>
        </div>
        <h1 className="pl-2 text-xs text-[#dcdcdc]">
          Nouveau modèle [D:\MES DOCUMENTS\1NTERRACTIF\ARCHITECTURE\] - ARC+ X11 Edition Optimized
        </h1>
        <div className="flex items-center justify-end gap-3 pr-2">
          {['M1 9h8', 'M1 4h6v4H1zM3 4V2h6v4H7', 'M1 1l8 8M9 1l-8 8'].map((d, i) => (
            <button key={d} aria-label={['Réduire', 'Restaurer', 'Fermer'][i]}>
              <svg width="10" height="10" viewBox="0 0 10 10">
                <path d={d} stroke="#c8c8c8" strokeWidth="1.5" fill="none" />
              </svg>
            </button>
          ))}
        </div>
      </div>
      <nav className="flex h-[27px] items-end pr-1 pl-[55px] text-xs">
        {TABS.map((tab) => (
          <button
            key={tab}
            className={`h-6 whitespace-nowrap ${tab === 'Accueil' ? 'mr-[2px] rounded-t-[3px] bg-linear-to-b from-[#f4f4f4] to-[#d3d6da] px-[12px] text-black' : 'px-[14px]'}`}
          >
            {tab}
          </button>
        ))}
        <button className="ml-auto h-6">A propos</button>
      </nav>
      <button aria-label="Menu ARC+" className="absolute top-[5px] left-[5px]">
        <svg width="36" height="36" viewBox="0 0 36 36">
          <circle cx="18" cy="18" r="17" fill="#f2f2f2" stroke="#999" />
          <path d="M17 3h-5Q7 8 4 17h6l3-8h4z" fill="#9b9b9b" />
          <path d="M4 19h6l1 3h3l1-3h2v7h-4l-1 3-4-1Q5 25 4 19z" fill="#9b9b9b" />
          <path d="M19 3h5v5h4v9h-9v-3h4v-3h-4zM19 19h9v8h-4v-4h-5z" fill="#cc1133" />
          <path d="M29 9c5 5 5 13 0 18z" fill="#cc1133" />
          <path d="M13 27h11v5q-6 2-11 0z" fill="#a3a3a3" />
        </svg>
      </button>
    </header>
  );
}

const SmallStack = ({ names }: { names: string[] }) => (
  <div className="flex w-7 flex-col items-center gap-[6px] pt-[4px]">
    {names.map((n) => (
      <button key={n} aria-label={n}>
        <Icon name={n} size={17} />
      </button>
    ))}
  </div>
);

function Ribbon() {
  return (
    <div className="flex h-[93px] shrink-0 gap-[3px] rounded-[4px] border-t border-white bg-linear-to-b from-[#dcdfe3] from-5% via-[#bcc2cb] via-25% to-[#ebefef] to-90% px-1 pt-[2px]">
      <Group title="Dessiner">{DRAW.map((c) => <RibbonButton key={c.icon} {...c} />)}</Group>
      <Group title="Annotation">
        <RibbonButton icon="textes" label="Textes" w="w-[44px]" drop />
        <RibbonButton icon="cotations" label="Cotations" w="w-[55px]" drop />
      </Group>
      <Group title="Couches">
        <SmallStack names={['eye', 'layers', 'layers2']} />
        <RibbonButton icon="commandes" label={'Commandes\ncalques'} w="w-[70px]" drop />
      </Group>
      <Group title="Utilitaires">
        <RibbonButton icon="vues" label="Vues" w="w-[44px]" drop />
        <RibbonButton icon="vues2" label="Vues" w="w-[42px]" />
        <SmallStack names={['window', 'sheet', 'envelope']} />
        <span className="mt-1 h-16 w-px bg-[#a5abb3]" />
        <SmallStack names={['export1', 'export2', 'cad']} />
      </Group>
      <Group title="Statut">
        {STATUS.map((c) => <RibbonButton key={c.icon} {...c} />)}
        <button aria-label="Pause" className="flex w-[26px] justify-center pt-[2px]">
          <Icon name="pause" size={32} />
        </button>
      </Group>
      <Group title="Transformer">{TRANSFORM.map((c) => <RibbonButton key={c.icon} {...c} />)}</Group>
    </div>
  );
}

const Line = () => <span className="ml-1 h-px w-[72px] shrink-0 bg-black" />;

function PropertyBars() {
  return (
    <div className="flex h-[33px] shrink-0 items-start gap-[2px] pt-[3px]">
      <Bar>
        <Tools items="dropper |" />
        <div className="flex items-center gap-[2px]">
          <Combo label="Couleur" value="1" className="h-[22px] w-[98px]" lead={<span className="ml-[3px] h-[14px] w-[14px] bg-black" />} />
          <Combo label="Type de ligne" className="h-[22px] w-[98px]" lead={<Line />} />
          <Combo label="Epaisseur" className="h-[22px] w-[98px]" lead={<Line />} />
        </div>
        <Tools items="brushlines" />
        <Combo
          label="Motif"
          className="mx-[2px] h-[22px] w-[98px]"
          lead={<span className="ml-[2px] flex h-[14px] w-[74px] shrink-0 items-center justify-center border border-black text-xs">X</span>}
        />
        <button aria-label="Couleur de fond" className="h-[22px] w-[22px] bg-black" />
        <Tools items="paint" />
      </Bar>
      <Bar>
        <Tools items="linetypes trowel* cube percent plan | info | hachurage* remplissage image lignesaide* visibilite | d2* d3 | house* clouds | sheet | camruler villa | axes>" />
      </Bar>
      <Bar>
        <Tools items="zoomwin zoomin zoomout zoomall pan prev next boxtop boxright boxleft boxback boxfront boxfloor sheet" />
      </Bar>
      <Bar>
        <Tools items="textgear textbrush |" />
        <Combo label="Style de texte" value="28-DEMOLIT" className="h-[22px] w-[98px]" bold />
        <span className="w-[44px] text-center text-xs text-[#6a7078]">Polices</span>
        <Combo label="Police" value="Arial" className="h-[22px] w-[57px]" flat />
        <input aria-label="Hauteur" defaultValue="0.250 m" className="h-[22px] w-[98px] border border-[#a5a5a5] bg-[#ebebeb] px-[3px] text-xs text-black" />
        <Tools items="| bold italic | alignleft aligncenter* alignleft |" />
        <button className="h-[22px] w-[22px] border-2 border-dotted border-black bg-[#fb0505] text-sm leading-4 font-bold text-black">A</button>
      </Bar>
    </div>
  );
}

function DimensionWindow() {
  const field = 'h-6 w-[98px] border border-[#a5a5a5] bg-[#efefef] px-[3px] text-xs text-[#8f8f8f]';
  return (
    <section className="absolute top-[14px] left-[546px] border-2 border-[#3c424b] bg-[#4b525c]">
      <div className="flex h-4 items-center gap-1 pr-[2px] pl-[3px]">
        <h2 className="mr-auto text-xs text-[#e8e8e8]">Dimension</h2>
        <button aria-label="Options">
          <Caret className="border-t-white" />
        </button>
        <button aria-label="Fermer la fenêtre">
          <svg width="12" height="12" viewBox="0 0 12 12">
            <path d="M2 1l8 10M10 1L2 11" stroke="#fff" strokeWidth="2.4" />
          </svg>
        </button>
      </div>
      <div className="flex h-[25px] items-center gap-[2px] bg-linear-to-b from-[#c3c8cf] to-[#a3a8b0]">
        <button aria-label="Réglage des cotes" className="flex w-[136px] justify-start pl-[40px]">
          <Icon name="dimgear" size={18} />
        </button>
        <button aria-label="Modifier les cotes" className="flex w-[136px] justify-start pl-[38px]">
          <Icon name="dimpen" size={18} />
        </button>
        <Combo label="Style de cote" value="61-EXT 0.12" className="h-6 w-[98px]" bold />
        <Combo label="Police de cote" value="Arial" className="h-6 w-[98px]" flat off />
        <input aria-label="Taille" defaultValue="0.12" disabled className={field} />
        <button className="h-6 w-[22px] border-2 border-dotted border-[#08222c] bg-[#0d5f7a] text-xs font-bold text-black">A</button>
        <Combo
          label="Extrémité"
          value="Sabrer"
          className="h-6 w-[98px]"
          bold
          lead={
            <svg width="18" height="18" viewBox="0 0 18 18" className="shrink-0">
              <path d="M3 15L14 4" stroke="#000" strokeWidth="2.4" />
            </svg>
          }
        />
        <input aria-label="Décalage" defaultValue="0.0006" disabled className={field} />
        <button aria-label="Couleur de cote" className="h-6 w-[22px] border-b-2 border-dotted border-[#556] bg-[#04101f]" />
        <div className="flex h-6 w-[98px] items-center border border-[#8a8a8a] bg-[#efefef] text-[#8f8f8f]">
          <span className="flex-1 pl-px text-xs whitespace-nowrap">61 COTES EXT</span>
          <button aria-label="Choisir le calque" className="h-[18px] w-4 border border-[#999] text-xs leading-[10px]">...</button>
        </div>
        <Combo label="Unité" value="centimetres" className="h-6 w-[98px]" bold />
        <Combo label="Précision" value="0" className="h-6 w-[98px]" bold />
      </div>
    </section>
  );
}

function Canvas() {
  return (
    <main className="relative flex-1 border-t border-b-2 border-double border-[#d9d9d9] bg-white">
      <DimensionWindow />
      <svg className="absolute top-[5px] right-[9px] font-['Liberation_Sans',sans-serif]" width="72" height="76" viewBox="0 0 72 76">
        <path d="M2.500 14v59.500H62" stroke="#222" fill="none" />
        <text x="4" y="10" fontSize="13" fontWeight="bold">y</text>
        <text x="4" y="69" fontSize="12" fontWeight="bold" fill="#b8893a">z</text>
        <text x="63" y="69" fontSize="13" fontWeight="bold">x</text>
      </svg>
      <svg className="absolute top-[168px] left-[1014px]" width="13" height="19" viewBox="0 0 13 19">
        <path d="M1 1v14l3.500-3 2.500 6 2.500-1L7 11h5z" fill="#fff" stroke="#555" />
      </svg>
      <svg className="absolute bottom-[43px] left-[43px]" width="13" height="13" viewBox="0 0 13 13">
        <path d="M6.500 0v13M0 6.500h13M2 2l9 9M11 2l-9 9" stroke="#000" />
      </svg>
    </main>
  );
}

function StatusBar() {
  const cell = 'flex h-5 items-center border border-t-[#777] border-r-white border-b-white border-l-[#777] pl-[2px]';
  return (
    <div className="flex h-8 shrink-0 items-center bg-[#f0f0f0] pr-[14px] pl-px text-[11px] text-black">
      <Combo label="Commande" className="h-[19px] w-[290px]" />
      <span className="ml-[6px]">Entrez la(les) commande(s):</span>
      <div className="ml-auto flex items-center gap-[7px]">
        <span className={`${cell} w-[61px]`}>Tous</span>
        <div className={`${cell} w-[163px] bg-white`}>
          <span className="flex-1">Calque commun</span>
          <button aria-label="Choisir un calque" className="h-[18px] w-[18px] border border-t-white border-r-[#666] border-b-[#666] border-l-white bg-[#ececec] leading-3">...</button>
        </div>
        <button aria-label="Calque courant" className="-ml-1 flex h-5 w-5 items-center justify-center border border-r-[#666] border-b-[#666] border-l-white bg-[#dcdcdc]">
          <Icon name="layerdown" size={16} />
        </button>
        <span className={`${cell} w-[77px]`}>TSC 100</span>
        <span className={`${cell} w-[61px]`}>1.123 m</span>
      </div>
    </div>
  );
}

const LEFT_TOP =
  'tag | xyz dist dist2 angle | seg perim curve | area areapoly areasquare areablue outline | m2fill m2split m2ft | reportask report | srvadd srvlink srvdel';
const LEFT_SNAP =
  'magnet* magnetoff snapend* snapmid* snapcross* snapnear* snapcenter* snapperp* snaptan* snaplast* magnetgear';
const RIGHT_EDIT = 'etirement> deplacer> copier> decalage> rotation> miroir> echelle> aligner> exploser trash>';
const RIGHT_SNAP =
  'crossred | anglered> | nodes segred segblue rectred dotgrid grid lanes | vred | bracket> caliper caliper2 | bars> | arcred> | ringred> | chain> | starred> | arcdel listdel';
const RIGHT_VIEWS =
  'room roomdown roomblue roomse roomside roomright | dimbrush dimred dimbox viewports viewports2 slash';

function SideTabs() {
  const tab =
    'border border-[#8d8d8d] border-r-0 bg-[#f4f4f4] pr-[3px] pl-px pt-1 text-start text-xs leading-[14px] whitespace-nowrap text-[#222] [writing-mode:vertical-rl]';
  return (
    <div className="flex w-5 shrink-0 flex-col items-stretch gap-[14px] bg-[#f0f0f0] pt-[2px] font-['Liberation_Sans',sans-serif]">
      <button className={`${tab} h-[142px]`}>Gestionnaire de calques</button>
      <button className={`${tab} h-[204px]`}>Gestionnaire de caméras et coupes</button>
      <button className={`${tab} h-[148px]`}>Gestionnaire de rapports</button>
    </div>
  );
}

function Coord({ label, value, w, off, lock = true }: { label: string; value: string; w: string; off?: boolean; lock?: boolean }) {
  return (
    <label className="flex items-center">
      <span className="w-[10px] text-center text-sm text-black">{label}</span>
      {lock && (
        <span className="ml-[3px] flex h-[18px] w-[15px] items-center justify-center bg-[#dfe1e4]">
          <Icon name="unlock" size={14} />
        </span>
      )}
      <input
        defaultValue={value}
        className={`h-[22px] border border-t-[#555] border-r-white border-b-white border-l-[#555] px-[3px] font-['Liberation_Sans',sans-serif] text-[13px] font-bold text-black ${w} ${off ? 'bg-[#ececec]' : 'bg-white'}`}
      />
    </label>
  );
}

function BottomBars() {
  return (
    <div className="flex h-[34px] shrink-0 items-start gap-[2px]">
      <Bar tall className="w-[640px]">
        <Tools items="wall wallsplit wallarc> wallstack wallslope | wallL wallarc wallT wallY wallX wallarc2 wallmove wallmove2> walltrash | cutwall> wallprop wallsync> wallbrush> wallrot> wallrot2> wallslope walldouble walltriple wallwarm" />
      </Bar>
      <Bar tall className="w-[751px]">
        <div className="flex h-full flex-1 items-center bg-[#717988]">
          <button aria-label="Mode relatif" className="flex h-4 w-4 items-center justify-center bg-[#d8d8d8]">
            <svg width="12" height="12" viewBox="0 0 12 12">
              <path d="M6 1l4 9H2z" fill="none" stroke="#222" />
            </svg>
          </button>
          <div className="flex items-center gap-[1px]">
            <Coord label="X" value="34.447" w="w-[58px]" />
            <Coord label="Y" value="20.392" w="w-[60px]" />
            <Coord label="Z" value="0.000" w="w-[58px]" off />
            <Coord label="L" value="40.030" w="w-[52px]" lock={false} />
            <Coord label="A" value="30.62" w="w-[52px]" lock={false} />
          </div>
          <div className="ml-auto flex gap-[6px] pr-1">
            <Combo label="Echelle" value="1:101.23" className="h-[23px] w-[100px]" bold />
            <Combo label="Navigation" value="Navigation" className="h-[23px] w-[100px]" bold />
            <Combo label="Remplissage" value="Remplir Tru" className="h-[23px] w-[100px]" bold />
          </div>
        </div>
      </Bar>
      <Bar tall className="w-[432px]">
        <Tools items="surfgrid surfpage" />
        <Combo label="Surfaces" value="SURFACES" className="mx-px h-[23px] w-[98px]" bold />
        <Tools items="surfslash surfadd surfedit surftable surfsync surfcheck surfhand tableadd tableedit excel redgear redmail" />
      </Bar>
    </div>
  );
}

export default function App() {
  return (
    <div className="flex h-screen flex-col overflow-hidden bg-[#535353] font-['Roboto','Open_Sans',sans-serif]">
      <Header />
      <Ribbon />
      <PropertyBars />
      <div className="flex min-h-0 flex-1">
        <div className="flex w-[25px] shrink-0 flex-col justify-between pt-2">
          <SideBar className="items-end">
            <Tools items={LEFT_TOP} vertical />
          </SideBar>
          <SideBar className="items-end">
            <Tools items={LEFT_SNAP} vertical />
          </SideBar>
        </div>
        <div className="ml-[2px] flex min-w-0 flex-1 flex-col border-l-[3px] border-double border-[#aaa] bg-[#f0f0f0] pt-[2px]">
          <div className="flex min-h-0 flex-1">
            <div className="flex min-w-0 flex-1 flex-col">
              <div className="mr-[6px] flex min-h-0 flex-1 border-r border-[#ccc]">
                <Canvas />
              </div>
              <StatusBar />
            </div>
            <SideTabs />
          </div>
        </div>
        <div className="flex w-[37px] shrink-0 flex-col">
          <SideBar>
            <Tools items={RIGHT_EDIT} vertical arrows />
          </SideBar>
        </div>
        <div className="flex w-[37px] shrink-0 flex-col gap-[2px]">
          <SideBar className="pl-[5px]">
            <Tools items={RIGHT_SNAP} vertical arrows />
          </SideBar>
          <SideBar className="flex-1 pl-[5px]">
            <Tools items={RIGHT_VIEWS} vertical arrows />
          </SideBar>
        </div>
      </div>
      <BottomBars />
      <footer className="flex h-[6px] shrink-0 justify-end bg-[#262626] pr-[230px]">
        <span className="w-[130px] bg-[#444]" />
      </footer>
    </div>
  );
}
